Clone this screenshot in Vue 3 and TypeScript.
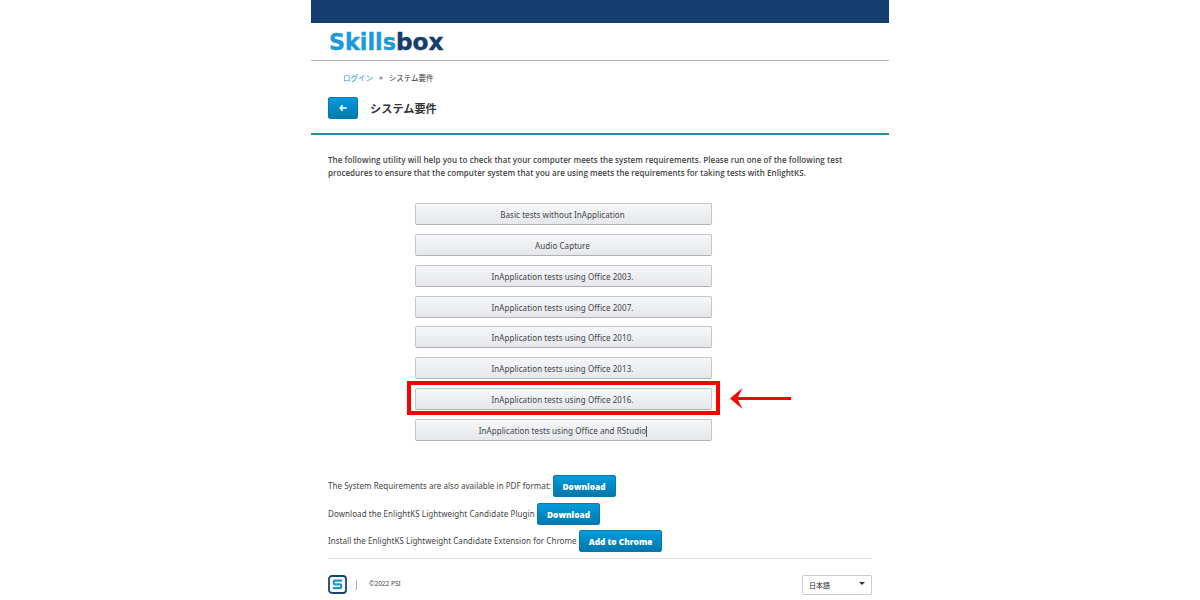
<template>
  <div class="page">
    <div class="top-bar"></div>
    <header class="header">
      <svg class="logo" width="120" height="36" viewBox="0 -6 120 36">
        <text class="logo-text logo-light" x="0" y="18.5" textLength="67" lengthAdjust="spacingAndGlyphs">Skills</text>
        <text class="logo-text logo-dark" x="67" y="18.5" textLength="47.5" lengthAdjust="spacingAndGlyphs">box</text>
      </svg>
    </header>

    <section class="title-area">
      <nav class="breadcrumb">
        <a class="crumb-link">ログイン</a>
        <span class="crumb-sep">»</span>
        <span>システム要件</span>
      </nav>
      <div class="title-row">
        <button class="btn btn-back" aria-label="戻る">
          <svg width="8" height="8" viewBox="0 0 8 8">
            <path d="M3.6 1.3L1.2 4L3.6 6.7M1.5 4H7.8" fill="none" stroke="#fff" stroke-width="1.6" />
          </svg>
        </button>
        <h1 class="title">システム要件</h1>
      </div>
    </section>

    <main class="content">
      <p class="intro">
        <span class="intro-first">The following utility will help you to check that your computer meets the system requirements. Please run one of the following test</span><br />
        <span class="intro-second">procedures to ensure that the computer system that you are using meets the requirements for taking tests with EnlightKS.</span>
      </p>

      <div class="test-list">
        <div v-for="test in tests" :key="test.label" class="test-row">
          <button class="test-btn" :class="{ editing: test.editing }">{{ test.label }}</button>
          <div v-if="test.highlighted" class="highlight"></div>
          <svg v-if="test.highlighted" class="arrow" width="62" height="22" viewBox="0 0 62 22">
            <path d="M0 10.5L12.5 0L8 9H61V12H8L12.5 21Z" fill="#f00" />
          </svg>
        </div>
      </div>

      <div class="downloads">
        <div v-for="item in downloads" :key="item.text" class="download-row" :class="item.name">
          <span class="download-text">{{ item.text }}</span>
          <button class="btn">{{ item.action }}</button>
        </div>
      </div>
    </main>

    <footer class="footer">
      <svg class="footer-logo" width="19" height="19" viewBox="0 0 19 19">
        <rect x="1" y="1" width="17" height="17" rx="3" fill="#fff" stroke="#1b426f" stroke-width="1.8" />
        <path d="M14 5.6H6.7Q5.8 5.6 5.8 6.5V8.5Q5.8 9.4 6.7 9.4H12.2Q13.1 9.4 13.1 10.3V12.3Q13.1 13.2 12.2 13.2H4.8" fill="none" stroke="#1a9bd7" stroke-width="2.3" />
      </svg>
      <span class="divider"></span>
      <span class="copyright">©2022 PSI</span>
      <div class="language">
        <span>日本語</span>
        <span class="caret"></span>
      </div>
    </footer>
  </div>
</template>

<script setup lang="ts">
interface TestItem {
  label: string
  highlighted?: boolean
  editing?: boolean
}

const tests: TestItem[] = [
  { label: 'Basic tests without InApplication' },
  { label: 'Audio Capture' },
  { label: 'InApplication tests using Office 2003.' },
  { label: 'InApplication tests using Office 2007.' },
  { label: 'InApplication tests using Office 2010.' },
  { label: 'InApplication tests using Office 2013.' },
  { label: 'InApplication tests using Office 2016.', highlighted: true },
  { label: 'InApplication tests using Office and RStudio', editing: true }
]

const downloads = [
  { name: 'pdf', text: 'The System Requirements are also available in PDF format:', action: 'Download' },
  { name: 'plugin', text: 'Download the EnlightKS Lightweight Candidate Plugin', action: 'Download' },
  { name: 'chrome', text: 'Install the EnlightKS Lightweight Candidate Extension for Chrome', action: 'Add to Chrome' }
]
</script>

<style>
body {
  background: #fff;
}
</style>

<style scoped>
.page {
  width: 578px;
  height: 600px;
  margin: 0 auto;
  overflow: hidden;
  box-sizing: border-box;
  font-family: "Noto Sans", "Noto Sans CJK JP", sans-serif;
  font-size: 8px;
  color: #444;
  background: #fff;
}

.top-bar {
  height: 23px;
  background: #133e6e;
}

.header {
  box-sizing: border-box;
  height: 38px;
  padding: 2px 0 0 18px;
  border-bottom: 1px solid #b5b5b5;
}

.logo {
  display: block;
}

.logo-text {
  font-family: "DejaVu Sans", sans-serif;
  font-size: 22.5px;
  font-weight: 700;
  stroke-width: 0.4;
}

.logo-light {
  fill: #1a9bd7;
  stroke: #1a9bd7;
}

.logo-dark {
  fill: #133e6e;
  stroke: #133e6e;
}

.title-area {
  box-sizing: border-box;
  height: 74px;
  padding: 10px 17px 0;
  border-bottom: 2px solid #258bb5;
}

.breadcrumb {
  display: flex;
  align-items: center;
  height: 12px;
  padding-left: 15px;
  font-size: 7.5px;
  color: #333;
}

.crumb-link {
  color: #1a93c8;
}

.crumb-sep {
  margin: 0 6px;
}

.title-row {
  display: flex;
  align-items: center;
  gap: 12px;
  margin-top: 14px;
}

.title {
  margin: 0;
  padding-top: 2px;
  font-size: 11.2px;
  font-weight: 700;
  line-height: 20px;
  color: #333;
}

.btn {
  box-sizing: border-box;
  height: 22px;
  padding: 1px 0 0;
  border: 1px solid #0878ad;
  border-radius: 2px;
  background: linear-gradient(#019cdd, #0478ac);
  color: #fff;
  font-family: "Open Sans", sans-serif;
  font-size: 8.3px;
  font-weight: 800;
  line-height: 19px;
}

.btn-back {
  display: flex;
  align-items: center;
  justify-content: center;
  width: 30px;
  padding: 0;
}

.content {
  box-sizing: border-box;
  height: 424px;
  margin: 0 17px;
  padding-top: 18px;
  border-bottom: 1px solid #ddd;
}

.intro {
  margin: 0;
  font-family: "Open Sans", sans-serif;
  font-size: 8px;
  font-weight: 600;
  line-height: 13px;
  letter-spacing: 0.07px;
  white-space: nowrap;
}

.intro-second {
  letter-spacing: 0.04px;
}

.test-list {
  display: flex;
  flex-direction: column;
  gap: 8.85px;
  width: 297px;
  margin: 24px 0 0 87px;
}

.test-row {
  position: relative;
  height: 22px;
}

.test-btn {
  display: block;
  box-sizing: border-box;
  width: 100%;
  height: 22px;
  padding: 1px 2px 0 0;
  border: 1px solid #c5c6ca;
  border-bottom-color: #b0b1b6;
  border-radius: 2px;
  background: linear-gradient(#f6f7f9, #e5e7eb);
  color: #444;
  font-family: inherit;
  font-size: 8px;
  line-height: 19px;
  letter-spacing: 0.07px;
}

.editing::after {
  content: '';
  display: inline-block;
  width: 1px;
  height: 11px;
  margin-right: -1px;
  vertical-align: -3px;
  background: #555;
}

.highlight {
  position: absolute;
  top: -7px;
  left: -8px;
  width: 313px;
  height: 34px;
  box-sizing: border-box;
  border: 4px solid #f00;
}

.arrow {
  position: absolute;
  top: 0;
  left: 315px;
}

.downloads {
  margin-top: 34px;
}

.download-row {
  display: flex;
  align-items: center;
  gap: 2px;
  height: 22px;
}

.download-text {
  padding-bottom: 1px;
  letter-spacing: 0.04px;
  white-space: nowrap;
}

.pdf .download-text {
  width: 222.5px;
}

.plugin .download-text {
  width: 207px;
  letter-spacing: 0.07px;
}

.chrome .download-text {
  width: 249px;
}

.pdf .btn,
.plugin .btn {
  width: 63px;
}

.plugin {
  margin-top: 6px;
}

.chrome {
  margin-top: 5px;
}

.chrome .btn {
  width: 83px;
}

.footer {
  display: flex;
  align-items: center;
  height: 21px;
  margin: 15px 17px 0;
}

.divider {
  width: 1px;
  height: 10px;
  margin: 0 12px 0 9px;
  background: #bbaea2;
}

.copyright {
  padding-bottom: 2px;
  font-size: 6.5px;
}

.language {
  box-sizing: border-box;
  display: flex;
  align-items: center;
  justify-content: space-between;
  width: 70px;
  height: 20px;
  margin-left: auto;
  padding: 0 6px;
  border: 1px solid #ccc;
  border-radius: 2px;
  font-size: 7px;
  color: #222;
}

.caret {
  width: 0;
  height: 0;
  margin-bottom: 2px;
  border: 3px solid transparent;
  border-top-color: #333;
  border-bottom: 0;
}
</style>
